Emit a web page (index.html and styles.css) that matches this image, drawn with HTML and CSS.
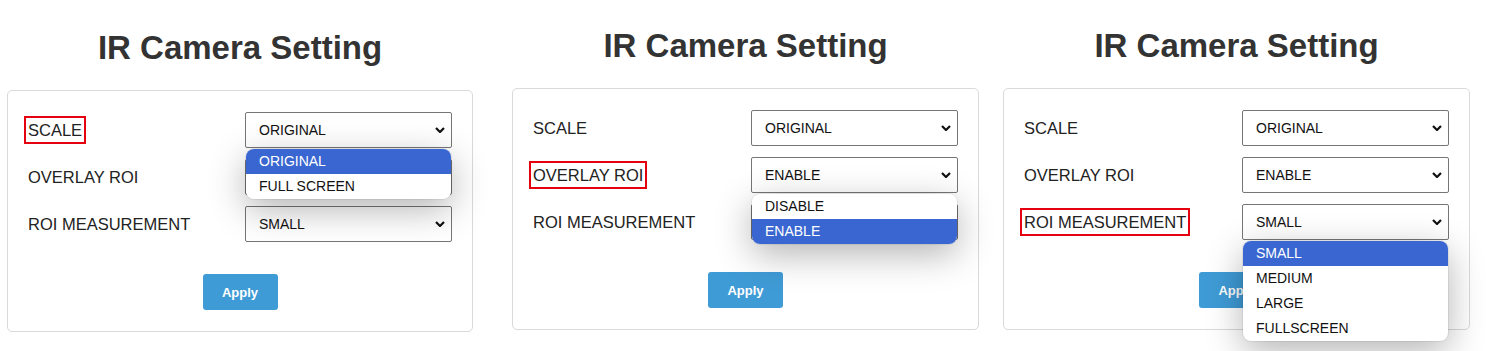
FILE: index.html
```html
<!DOCTYPE html>
<html>
<head>
    <meta charset="UTF-8">
    <title>IR Camera Setting</title>
    <link rel="stylesheet" href="styles.css">
</head>
<body>
<div class="page">
    <!-- scale menu open -->
    <section class="panel panel-first">
        <h1 class="title">IR Camera Setting</h1>
        <div class="card">
            <div class="row">
                <span class="label marked">SCALE</span>
                <div class="select">
                    <span>ORIGINAL</span>
                    <svg class="chev" width="10" height="6" viewBox="0 0 10 6"><polyline points="1,1 5,5 9,1"/></svg>
                    <ul class="menu">
                        <li class="on">ORIGINAL</li>
                        <li>FULL SCREEN</li>
                    </ul>
                </div>
            </div>
            <div class="row">
                <span class="label">OVERLAY ROI</span>
                <div class="select">
                    <span>ENABLE</span>
                    <svg class="chev" width="10" height="6" viewBox="0 0 10 6"><polyline points="1,1 5,5 9,1"/></svg>
                </div>
            </div>
            <div class="row">
                <span class="label">ROI MEASUREMENT</span>
                <div class="select">
                    <span>SMALL</span>
                    <svg class="chev" width="10" height="6" viewBox="0 0 10 6"><polyline points="1,1 5,5 9,1"/></svg>
                </div>
            </div>
            <div class="actions"><button class="apply">Apply</button></div>
        </div>
    </section>

    <!-- overlay menu open -->
    <section class="panel panel-mid">
        <h1 class="title">IR Camera Setting</h1>
        <div class="card">
            <div class="row">
                <span class="label">SCALE</span>
                <div class="select">
                    <span>ORIGINAL</span>
                    <svg class="chev" width="10" height="6" viewBox="0 0 10 6"><polyline points="1,1 5,5 9,1"/></svg>
                </div>
            </div>
            <div class="row">
                <span class="label marked">OVERLAY ROI</span>
                <div class="select">
                    <span>ENABLE</span>
                    <svg class="chev" width="10" height="6" viewBox="0 0 10 6"><polyline points="1,1 5,5 9,1"/></svg>
                    <ul class="menu">
                        <li>DISABLE</li>
                        <li class="on">ENABLE</li>
                    </ul>
                </div>
            </div>
            <div class="row">
                <span class="label">ROI MEASUREMENT</span>
                <div class="select">
                    <span>SMALL</span>
                    <svg class="chev" width="10" height="6" viewBox="0 0 10 6"><polyline points="1,1 5,5 9,1"/></svg>
                </div>
            </div>
            <div class="actions"><button class="apply">Apply</button></div>
        </div>
    </section>

    <!-- measurement menu open -->
    <section class="panel">
        <h1 class="title">IR Camera Setting</h1>
        <div class="card">
            <div class="row">
                <span class="label">SCALE</span>
                <div class="select">
                    <span>ORIGINAL</span>
                    <svg class="chev" width="10" height="6" viewBox="0 0 10 6"><polyline points="1,1 5,5 9,1"/></svg>
                </div>
            </div>
            <div class="row">
                <span class="label">OVERLAY ROI</span>
                <div class="select">
                    <span>ENABLE</span>
                    <svg class="chev" width="10" height="6" viewBox="0 0 10 6"><polyline points="1,1 5,5 9,1"/></svg>
                </div>
            </div>
            <div class="row">
                <span class="label marked">ROI MEASUREMENT</span>
                <div class="select">
                    <span>SMALL</span>
                    <svg class="chev" width="10" height="6" viewBox="0 0 10 6"><polyline points="1,1 5,5 9,1"/></svg>
                    <ul class="menu">
                        <li class="on">SMALL</li>
                        <li>MEDIUM</li>
                        <li>LARGE</li>
                        <li>FULLSCREEN</li>
                    </ul>
                </div>
            </div>
            <div class="actions"><button class="apply">Apply</button></div>
        </div>
    </section>
</div>
</body>
</html>
```

FILE: styles.css
```css
body{margin:0;background:#fff;color:#222;font-family:"Liberation Sans",Arial,sans-serif;}
.page{display:flex;align-items:flex-start;padding:0 0 22px 7px;}
.panel{width:467px;flex:none;}
.panel-first{width:466px;margin-top:2px;margin-right:39px;}
.panel-mid{margin-right:24px;}
.title{margin:27px 0 23px;font-size:33px;line-height:38px;font-weight:bold;text-align:center;color:#333;}
.card{border:1px solid #dadada;border-radius:5px;padding:21px 20px 21px;}
.row{display:flex;align-items:center;justify-content:space-between;height:36px;margin-bottom:11px;}
.label{font-size:16.5px;line-height:20px;}
.label.marked{outline:2px solid #e4000f;outline-offset:2px;}
.select{position:relative;box-sizing:border-box;width:207px;height:36px;display:flex;align-items:center;justify-content:space-between;padding:0 6px 0 13px;border:1px solid #767676;border-radius:2px;background:#fff;font-size:14px;color:#111;}
.chev{fill:none;stroke:#111;stroke-width:2.2;}
.menu{position:absolute;left:0;right:0;top:calc(100% + 2px);z-index:2;margin:0;padding:0;list-style:none;background:#fff;border-radius:8px;overflow:hidden;box-shadow:0 0 0 1px rgba(0,0,0,0.06),0 10px 36px rgba(0,0,0,0.3);}
.menu li{height:25px;line-height:25px;padding-left:13px;color:#111;}
.menu li.on{background:#3966d0;color:#fff;}
.actions{display:flex;justify-content:center;margin-top:32px;}
.apply{width:75px;height:36px;border:0;border-radius:3px;background:#3f9bd6;color:#fff;font:bold 13px "Liberation Sans",Arial,sans-serif;}
```
